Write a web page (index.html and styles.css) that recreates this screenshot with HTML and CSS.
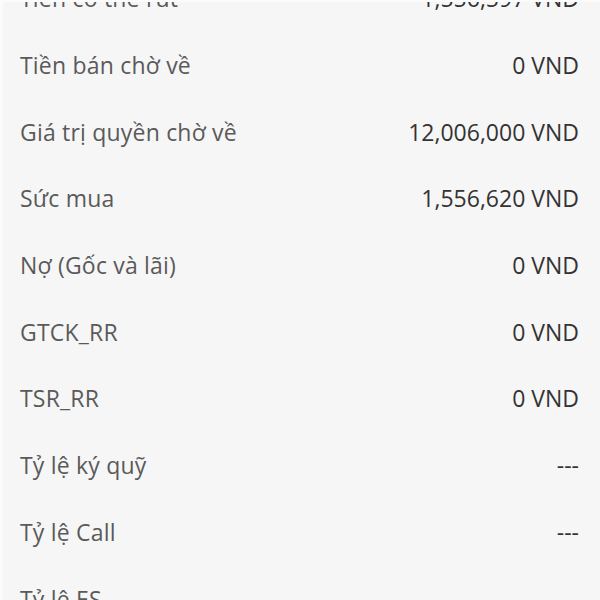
FILE: index.html
```html
<!DOCTYPE html>
<html lang="vi">
<head>
  <meta charset="UTF-8">
  <title>Tài sản</title>
  <link rel="stylesheet" href="styles.css">
</head>
<body>
  <div class="panel">
    <div class="info-list">
      <div class="info-row"><span class="label">Tiền có thể rút</span><span class="value">1,556,597 VND</span></div>
      <div class="info-row"><span class="label">Tiền bán chờ về</span><span class="value">0 VND</span></div>
      <div class="info-row"><span class="label">Giá trị quyền chờ về</span><span class="value">12,006,000 VND</span></div>
      <div class="info-row"><span class="label">Sức mua</span><span class="value">1,556,620 VND</span></div>
      <div class="info-row"><span class="label">Nợ (Gốc và lãi)</span><span class="value">0 VND</span></div>
      <div class="info-row"><span class="label">GTCK_RR</span><span class="value">0 VND</span></div>
      <div class="info-row"><span class="label">TSR_RR</span><span class="value">0 VND</span></div>
      <div class="info-row"><span class="label">Tỷ lệ ký quỹ</span><span class="value">---</span></div>
      <div class="info-row"><span class="label">Tỷ lệ Call</span><span class="value">---</span></div>
      <div class="info-row"><span class="label">Tỷ lệ ES</span><span class="value">---</span></div>
    </div>
  </div>
</body>
</html>
```

FILE: styles.css
```css
html, body {
  margin: 0;
  padding: 0;
  height: 100%;
  overflow: hidden;
}
body {
  font-family: "Open Sans", "Noto Sans", sans-serif;
  background-color: #fbfbfb;
}
.panel {
  margin: 2px 0 0 3px;
  height: 100%;
  background-color: #f6f6f6;
  overflow: hidden;
}
.info-list {
  margin-top: -37px;
}
.info-row {
  height: 66.7px;
  display: flex;
  align-items: center;
  justify-content: space-between;
  padding: 0 21px 0 17px;
  font-size: 23px;
}
.label {
  color: #5a5a5a;
  letter-spacing: 0.2px;
}
.value {
  color: #333;
}
```
